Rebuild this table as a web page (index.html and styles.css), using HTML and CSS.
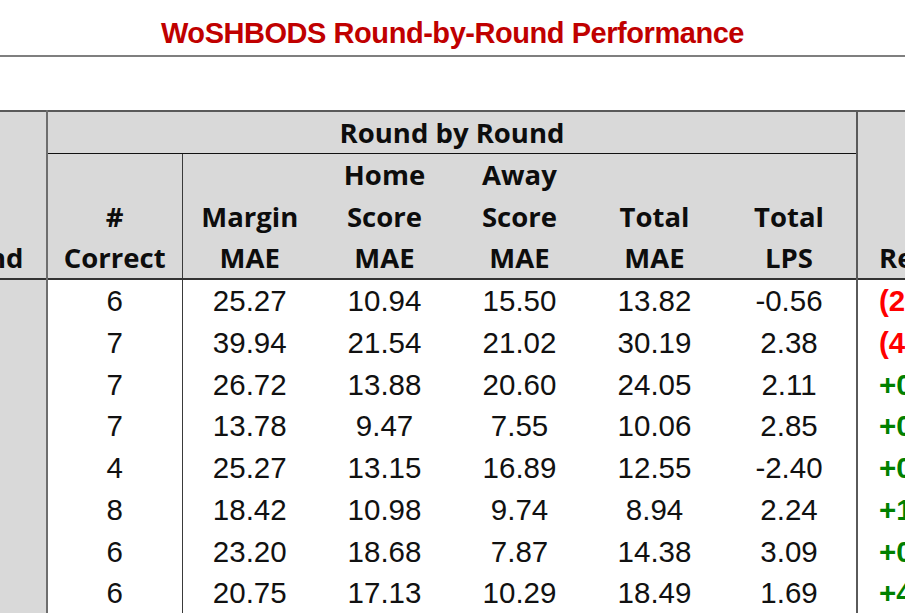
FILE: index.html
```html
<!DOCTYPE html>
<html lang="en">
<head>
<meta charset="utf-8">
<title>WoSHBODS Round-by-Round Performance</title>
<link rel="stylesheet" href="styles.css">
</head>
<body>
<div class="sheet">
  <h1 class="title">WoSHBODS Round-by-Round Performance</h1>
  <div class="table-wrap">
    <table class="perf">
      <colgroup>
        <col class="c-round"><col class="c-num"><col class="c-num"><col class="c-num"><col class="c-num"><col class="c-num"><col class="c-num"><col class="c-result">
      </colgroup>
      <thead>
        <tr class="h-top">
          <th rowspan="2" class="round-col">Round</th>
          <th colspan="6" class="group">Round by Round</th>
          <th rowspan="2" class="result-col">Return</th>
        </tr>
        <tr class="h-sub">
          <th class="sep">#<br>Correct</th>
          <th>Margin<br>MAE</th>
          <th>Home<br>Score<br>MAE</th>
          <th>Away<br>Score<br>MAE</th>
          <th>Total<br>MAE</th>
          <th>Total<br>LPS</th>
        </tr>
      </thead>
      <tbody>
        <tr><td class="round-col">1</td><td class="sep">6</td><td>25.27</td><td>10.94</td><td>15.50</td><td>13.82</td><td>-0.56</td><td class="result-col neg">(2.31)</td></tr>
        <tr><td class="round-col">2</td><td class="sep">7</td><td>39.94</td><td>21.54</td><td>21.02</td><td>30.19</td><td>2.38</td><td class="result-col neg">(4.05)</td></tr>
        <tr><td class="round-col">3</td><td class="sep">7</td><td>26.72</td><td>13.88</td><td>20.60</td><td>24.05</td><td>2.11</td><td class="result-col pos">+0.82</td></tr>
        <tr><td class="round-col">4</td><td class="sep">7</td><td>13.78</td><td>9.47</td><td>7.55</td><td>10.06</td><td>2.85</td><td class="result-col pos">+0.64</td></tr>
        <tr><td class="round-col">5</td><td class="sep">4</td><td>25.27</td><td>13.15</td><td>16.89</td><td>12.55</td><td>-2.40</td><td class="result-col pos">+0.17</td></tr>
        <tr><td class="round-col">6</td><td class="sep">8</td><td>18.42</td><td>10.98</td><td>9.74</td><td>8.94</td><td>2.24</td><td class="result-col pos">+1.36</td></tr>
        <tr><td class="round-col">7</td><td class="sep">6</td><td>23.20</td><td>18.68</td><td>7.87</td><td>14.38</td><td>3.09</td><td class="result-col pos">+0.93</td></tr>
        <tr><td class="round-col">8</td><td class="sep">6</td><td>20.75</td><td>17.13</td><td>10.29</td><td>18.49</td><td>1.69</td><td class="result-col pos">+4.12</td></tr>
      </tbody>
    </table>
  </div>
</div>
</body>
</html>
```

FILE: styles.css
```css
html, body {
  margin: 0;
  padding: 0;
  background: #ffffff;
}

.sheet {
  width: 905px;
  height: 613px;
  overflow: hidden;
}

.title {
  margin: 0;
  height: 45px;
  padding-top: 10px;
  line-height: 46px;
  box-sizing: content-box;
  font-family: "Liberation Sans", sans-serif;
  font-weight: 700;
  font-size: 29px;
  letter-spacing: -0.45px;
  color: #c00000;
  text-align: center;
  border-bottom: 2px solid #7f7f7f;
  white-space: nowrap;
}

.table-wrap {
  margin-top: 53px;
  margin-left: -88px;
}

.perf {
  border-collapse: collapse;
  table-layout: fixed;
  width: 1145px;
  font-family: "Liberation Sans", Arial, sans-serif;
  font-size: 29.5px;
  color: #111;
}

.c-round, .c-num { width: 135px; }
.c-result { width: 200px; }

.perf thead th {
  background: #d9d9d9;
  font-family: "Open Sans", sans-serif;
  font-weight: 700;
  font-size: 27.5px;
  padding: 0;
  line-height: 41.3px;
  text-align: center;
  white-space: nowrap;
  color: #0d0d0d;
}

.h-top th {
  border-top: 2px solid #5a5a5a;
}

.h-top .group {
  height: 41px;
  vertical-align: middle;
  border-bottom: 1px solid #111;
}

.h-sub th {
  height: 124px;
  vertical-align: bottom;
}

.perf thead th.round-col,
.perf thead th.result-col {
  vertical-align: bottom;
}

.perf thead {
  border-bottom: 2px solid #333;
}

.perf td {
  padding: 0;
  height: 41.7px;
  line-height: 41.7px;
  text-align: center;
  white-space: nowrap;
}

.round-col {
  background: #d9d9d9;
  border-right: 2px solid #6e6e6e;
}

.perf td.round-col {
  color: #d9d9d9;
}

.sep {
  border-right: 1px solid #3a3a3a;
}

.result-col {
  border-left: 2px solid #5a5a5a;
  text-align: left !important;
  padding-left: 21px !important;
}

.neg {
  color: #ff0000;
  font-weight: 700;
}

.pos {
  color: #008000;
  font-weight: 700;
}
```
